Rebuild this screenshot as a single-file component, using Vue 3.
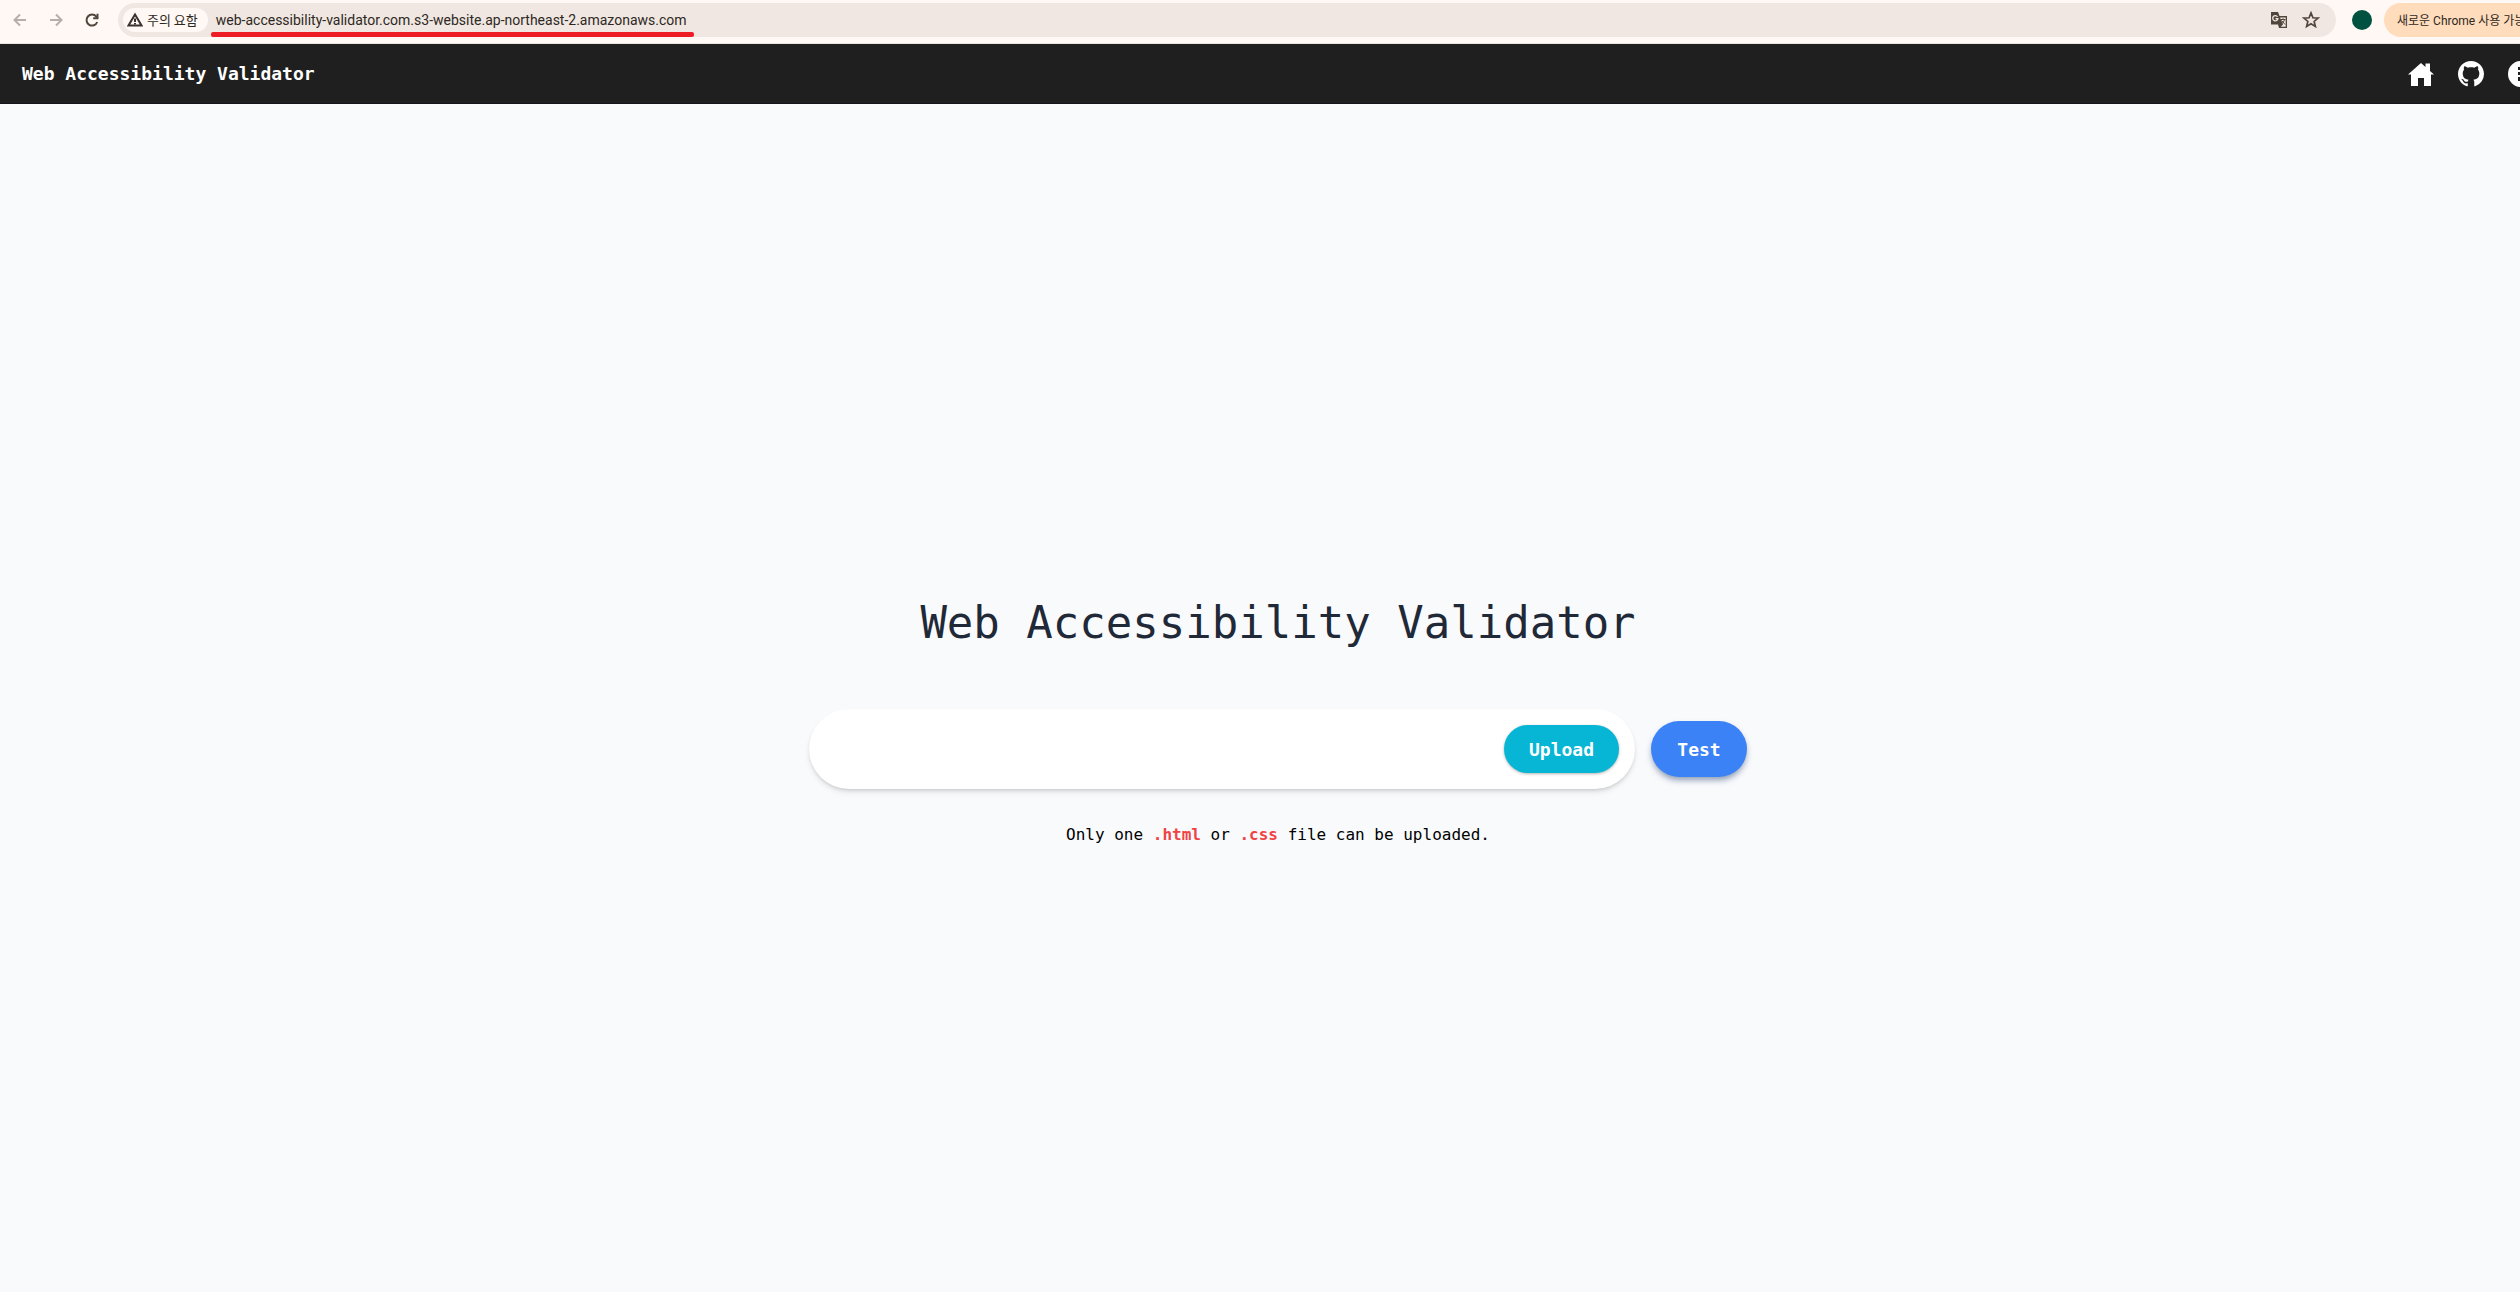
<template>
  <div class="window">
    <div class="toolbar">
      <nav class="history">
        <button type="button" aria-label="Back" disabled>
          <svg viewBox="0 0 16 16" class="tool-icon"><path d="M14 8H3M8 2.5 2.5 8 8 13.5" /></svg>
        </button>
        <button type="button" aria-label="Forward" disabled>
          <svg viewBox="0 0 16 16" class="tool-icon"><path d="M2 8h11M8 2.5 13.5 8 8 13.5" /></svg>
        </button>
        <button type="button" aria-label="Reload" class="reload">
          <svg viewBox="0 0 16 16" class="tool-icon">
            <path d="M13.2 10A5.5 5.5 0 1 1 12.3 4.6L13.5 6" />
            <path d="M13.5 1.8V6.2H9.2" />
          </svg>
        </button>
      </nav>
      <div class="address">
        <button type="button" class="security">
          <svg viewBox="0 0 16 16" class="warn-icon">
            <path d="M8 2.5 14.5 13.5H1.5Z" /><path d="M8 6.5v3.5M8 11v1.5" />
          </svg>
          주의 요함
        </button>
        <a class="url" :href="'http://' + url">{{ url }}</a>
        <button type="button" class="translate" aria-label="Translate">
          <svg viewBox="0 0 18 18">
            <path d="M1 1h7l1.5 4h7.5v12H9l-1-3.5H1Z" fill="#51463d" />
            <path d="M10 6.5h5.7v9.2h-5L13 13.5Z" fill="#f0e7e2" />
            <path d="M7.5 5.8A2.6 2.6 0 1 0 7.9 7.6H5.5" fill="none" stroke="#f0e7e2" stroke-width="1.3" />
            <path d="M10.5 8.5h5M13 7.3v1.2M14.5 8.5c-.4 2-1.6 3.5-3 4.4M11.5 9.5l3.5 4" fill="none" stroke="#51463d" />
          </svg>
        </button>
        <button type="button" class="star" aria-label="Bookmark">
          <svg viewBox="0 0 16 16"><path d="M8 1.7 9.7 6l4.6.3-3.5 3 1.1 4.5L8 11.4l-3.9 2.4 1.1-4.5-3.5-3L6.3 6Z" /></svg>
        </button>
      </div>
      <button type="button" class="avatar" aria-label="Profile"></button>
      <button type="button" class="update">새로운 Chrome 사용 가능</button>
    </div>

    <div class="page">
      <header class="header">
        <a href="#" class="brand">{{ title }}</a>
        <nav class="links">
          <a v-for="link in links" :key="link.name" href="#" :aria-label="link.name">
            <svg :viewBox="link.box"><path :d="link.path" fill-rule="evenodd" /></svg>
          </a>
        </nav>
      </header>
      <main class="main">
        <h1>{{ title }}</h1>
        <form class="form" @submit.prevent>
          <div class="file-box">
            <input v-model="fileName" type="text" aria-label="File name" readonly>
            <button type="button" class="upload">Upload</button>
          </div>
          <button type="submit" class="test">Test</button>
        </form>
        <p class="note">Only one <b>.html</b> or <b>.css</b> file can be uploaded.</p>
      </main>
    </div>
  </div>
</template>

<script setup>
import { ref } from 'vue'

const title = 'Web Accessibility Validator'
const url = 'web-accessibility-validator.com.s3-website.ap-northeast-2.amazonaws.com'
const fileName = ref('')

const links = [
  {
    name: 'Home',
    box: '0 0 26 26',
    path: 'M13 2 0 13.5h3V25h7v-8h6v8h7V13.5h3L22 10V2.5h-4.5V6Z'
  },
  {
    name: 'GitHub',
    box: '0 0 16 16',
    path: 'M8 0C3.58 0 0 3.58 0 8c0 3.54 2.29 6.53 5.47 7.59.4.07.55-.17.55-.38 0-.19-.01-.82-.01-1.49-2.01.37-2.53-.49-2.69-.94-.09-.23-.48-.94-.82-1.13-.28-.15-.68-.52-.01-.53.63-.01 1.08.58 1.23.82.72 1.21 1.87.87 2.33.66.07-.52.28-.87.51-1.07-1.78-.2-3.64-.89-3.64-3.95 0-.87.31-1.59.82-2.15-.08-.2-.36-1.02.08-2.12 0 0 .67-.21 2.2.82.64-.18 1.32-.27 2-.27s1.36.09 2 .27c1.53-1.04 2.2-.82 2.2-.82.44 1.1.16 1.92.08 2.12.51.56.82 1.27.82 2.15 0 3.07-1.87 3.75-3.65 3.95.29.25.54.73.54 1.48 0 1.07-.01 1.93-.01 2.2 0 .21.15.46.55.38A8.01 8.01 0 0 0 16 8c0-4.42-3.58-8-8-8Z'
  },
  {
    name: 'Info',
    box: '0 0 26 26',
    path: 'M13 0a13 13 0 1 0 0 26 13 13 0 0 0 0-26ZM10 6h6v3h-6ZM10 11h6v3h-6ZM10 16h6v4h-6Z'
  }
]
</script>

<style>
body {
  margin: 0;
  background: #f9fafc;
}
</style>

<style scoped>
.window {
  display: flex;
  flex-direction: column;
  min-height: 100vh;
  overflow: hidden;
}

button,
input {
  border: 0;
  padding: 0;
  font: inherit;
  color: inherit;
  background: none;
}

svg {
  display: block;
}

a {
  color: inherit;
  text-decoration: none;
}

.toolbar {
  display: flex;
  align-items: center;
  box-sizing: border-box;
  height: 44px;
  padding: 0 0 4px 12px;
  border-bottom: 1px solid #ece2dc;
  background: #fff8f5;
  color: #2e2823;
  font-family: Roboto, "Noto Sans CJK KR", sans-serif;
  font-size: 14px;
}

.history {
  display: flex;
  gap: 20px;
  margin-right: 18px;
  color: #b5aea9;
}

.tool-icon {
  width: 16px;
  height: 16px;
  fill: none;
  stroke: currentColor;
  stroke-width: 2;
}

.reload {
  color: #51463d;
}

.address {
  display: flex;
  flex: 1;
  align-items: center;
  box-sizing: border-box;
  height: 34px;
  padding: 0 16px 0 5px;
  border-radius: 17px;
  background: #f0e7e2;
}

.security {
  display: flex;
  align-items: center;
  gap: 4px;
  height: 24px;
  padding: 0 10px 0 4px;
  border-radius: 12px;
  background: #fff8f5;
  font-family: "Noto Sans CJK KR", sans-serif;
  font-size: 13px;
  white-space: nowrap;
}

.warn-icon {
  width: 16px;
  height: 16px;
  fill: none;
  stroke: #3a322c;
  stroke-width: 2;
}

.url {
  position: relative;
  margin-left: 8px;
  line-height: 20px;
}

/* red marker line under the address */
.url::after {
  content: "";
  position: absolute;
  top: 22px;
  right: -7px;
  left: -5px;
  height: 5px;
  border-radius: 2px;
  background: #ee1c25;
}

.translate {
  width: 18px;
  margin-left: auto;
}

.star {
  width: 18px;
  margin-left: 14px;
}

.star path {
  fill: none;
  stroke: #51463d;
  stroke-width: 1.5;
}

.avatar {
  width: 20px;
  height: 20px;
  margin: 0 12px 0 16px;
  border-radius: 50%;
  background: #00513f;
}

.update {
  width: 136px;
  height: 34px;
  padding-left: 13px;
  border-radius: 17px 0 0 17px;
  background: #ffdcbc;
  font-size: 12px;
  text-align: left;
  white-space: nowrap;
  overflow: hidden;
}

/* the page is slightly wider than the window and runs off its right edge */
.page {
  display: flex;
  flex: 1;
  flex-direction: column;
  width: calc(100% + 36px);
  font-family: "DejaVu Sans Mono", monospace;
}

.header {
  display: flex;
  align-items: center;
  justify-content: space-between;
  box-sizing: border-box;
  height: 60px;
  padding: 0 22px;
  border-bottom: 1px solid #17131c;
  background: #1f1f1f;
  color: #fff;
}

.brand {
  font-size: 18px;
  font-weight: 700;
}

.links {
  display: flex;
  gap: 24px;
}

.links svg {
  width: 26px;
  height: 26px;
  fill: currentColor;
}

.main {
  display: flex;
  flex: 1;
  flex-direction: column;
  align-items: center;
  justify-content: center;
  padding-top: 50px;
}

h1 {
  margin: 0 0 62px;
  color: #1f2937;
  font-size: 44px;
  font-weight: 400;
  line-height: 48px;
}

.form {
  display: flex;
  align-items: center;
  justify-content: center;
  gap: 16px;
  width: 100%;
  font-size: 18px;
  font-weight: 700;
}

.file-box {
  display: flex;
  flex: 0 1 826px;
  align-items: center;
  box-sizing: border-box;
  height: 80px;
  padding: 0 16px 0 32px;
  border-radius: 40px;
  background: #fff;
  box-shadow: 0 4px 6px -1px rgba(0, 0, 0, 0.1), 0 2px 4px -2px rgba(0, 0, 0, 0.2);
}

.file-box input {
  flex: 1;
  min-width: 0;
  outline: none;
}

.upload {
  width: 115px;
  height: 48px;
  border-radius: 24px;
  background: #06b6d4;
  color: #fff;
  box-shadow: 0 1px 3px rgba(0, 0, 0, 0.3);
}

.test {
  width: 96px;
  height: 56px;
  border-radius: 28px;
  background: #3b82f6;
  color: #fff;
  box-shadow: 0 4px 6px -1px rgba(30, 60, 110, 0.5);
}

.note {
  margin: 34px 0 0;
  color: #000;
  font-size: 16px;
  line-height: 24px;
}

.note b {
  color: #ef4444;
}
</style>
